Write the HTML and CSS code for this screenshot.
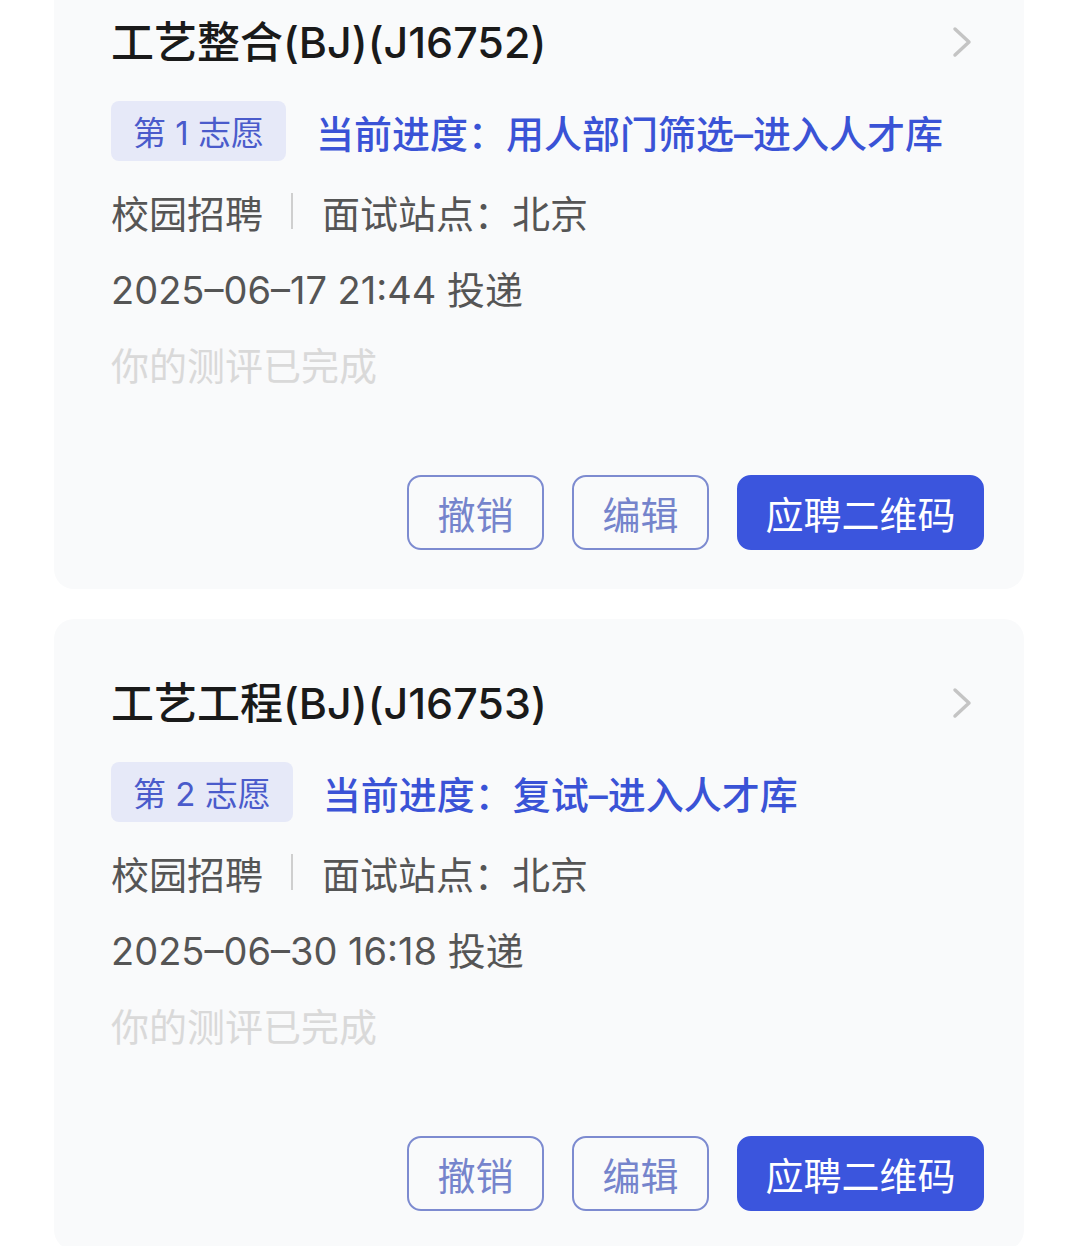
FILE: index.html
```html
<!DOCTYPE html>
<html lang="zh-CN">
<head>
    <meta charset="UTF-8">
    <meta name="viewport" content="width=device-width, initial-scale=1.0">
    <title>我的投递</title>
    <link rel="stylesheet" href="styles.css">
</head>
<body>
    <div class="list">
        <div class="card">
            <div class="card-head">
                <h2 class="job-title">工艺整合(BJ)(J16752)</h2>
                <svg class="chevron" width="20" height="32" viewBox="0 0 20 32"><path d="M3 3 L17 16 L3 29" fill="none" stroke="#c4c4c4" stroke-width="3.5" stroke-linecap="round" stroke-linejoin="round"/></svg>
            </div>
            <div class="progress-row">
                <span class="badge">第 1 志愿</span>
                <span class="progress">当前进度：用人部门筛选–进入人才库</span>
            </div>
            <div class="meta">
                <span>校园招聘</span>
                <span class="sep"></span>
                <span>面试站点：北京</span>
            </div>
            <div class="meta">2025–06–17 21:44 投递</div>
            <div class="meta muted">你的测评已完成</div>
            <div class="actions">
                <button class="btn">撤销</button>
                <button class="btn">编辑</button>
                <button class="btn primary">应聘二维码</button>
            </div>
        </div>

        <div class="card">
            <div class="card-head">
                <h2 class="job-title">工艺工程(BJ)(J16753)</h2>
                <svg class="chevron" width="20" height="32" viewBox="0 0 20 32"><path d="M3 3 L17 16 L3 29" fill="none" stroke="#c4c4c4" stroke-width="3.5" stroke-linecap="round" stroke-linejoin="round"/></svg>
            </div>
            <div class="progress-row">
                <span class="badge">第 2 志愿</span>
                <span class="progress">当前进度：复试–进入人才库</span>
            </div>
            <div class="meta">
                <span>校园招聘</span>
                <span class="sep"></span>
                <span>面试站点：北京</span>
            </div>
            <div class="meta">2025–06–30 16:18 投递</div>
            <div class="meta muted">你的测评已完成</div>
            <div class="actions">
                <button class="btn">撤销</button>
                <button class="btn">编辑</button>
                <button class="btn primary">应聘二维码</button>
            </div>
        </div>
    </div>
</body>
</html>
```

FILE: styles.css
```css
body {
    font-family: Inter, "Noto Sans CJK SC", sans-serif;
    margin: 0;
    padding: 0;
    background-color: #ffffff;
    overflow: hidden;
}
.list {
    margin-top: -42px;
    display: flex;
    flex-direction: column;
    gap: 30px;
}
.card {
    margin: 0 56px 0 54px;
    background-color: #f9fafb;
    border-radius: 20px;
    padding: 56px 40px 39px 57px;
}
.card-head {
    display: flex;
    align-items: center;
    justify-content: space-between;
    height: 56px;
}
.job-title {
    margin: 0;
    font-size: 43px;
    font-weight: 500;
    color: #1a1a1a;
    line-height: 56px;
}
.chevron {
    margin-right: 12px;
}
.progress-row {
    display: flex;
    align-items: center;
    margin-top: 31px;
}
.badge {
    display: inline-flex;
    align-items: center;
    height: 60px;
    padding: 0 22px;
    background-color: #e6e9f8;
    border-radius: 8px;
    color: #4a5bcb;
    font-size: 33px;
}
.progress {
    margin-left: 30px;
    font-size: 38px;
    font-weight: 500;
    color: #3a53d6;
}
.meta {
    display: flex;
    align-items: center;
    margin-top: 24px;
    height: 52px;
    font-size: 38px;
    color: #555555;
}
.progress-row + .meta {
    margin-top: 24px;
}
.sep {
    width: 2px;
    height: 36px;
    background-color: #cfcfcf;
    margin: 0 29px 0 28px;
}
.muted {
    color: #d9d9d9;
}
.actions {
    display: flex;
    justify-content: flex-end;
    gap: 28px;
    margin-top: 86px;
}
.btn {
    height: 75px;
    width: 137px;
    border: 2px solid #7d8bd0;
    border-radius: 14px;
    background-color: transparent;
    color: #7584cc;
    font-family: inherit;
    font-size: 38px;
    cursor: pointer;
}
.btn.primary {
    width: 247px;
    border-color: #3b55dd;
    background-color: #3b55dd;
    color: #ffffff;
}
```
